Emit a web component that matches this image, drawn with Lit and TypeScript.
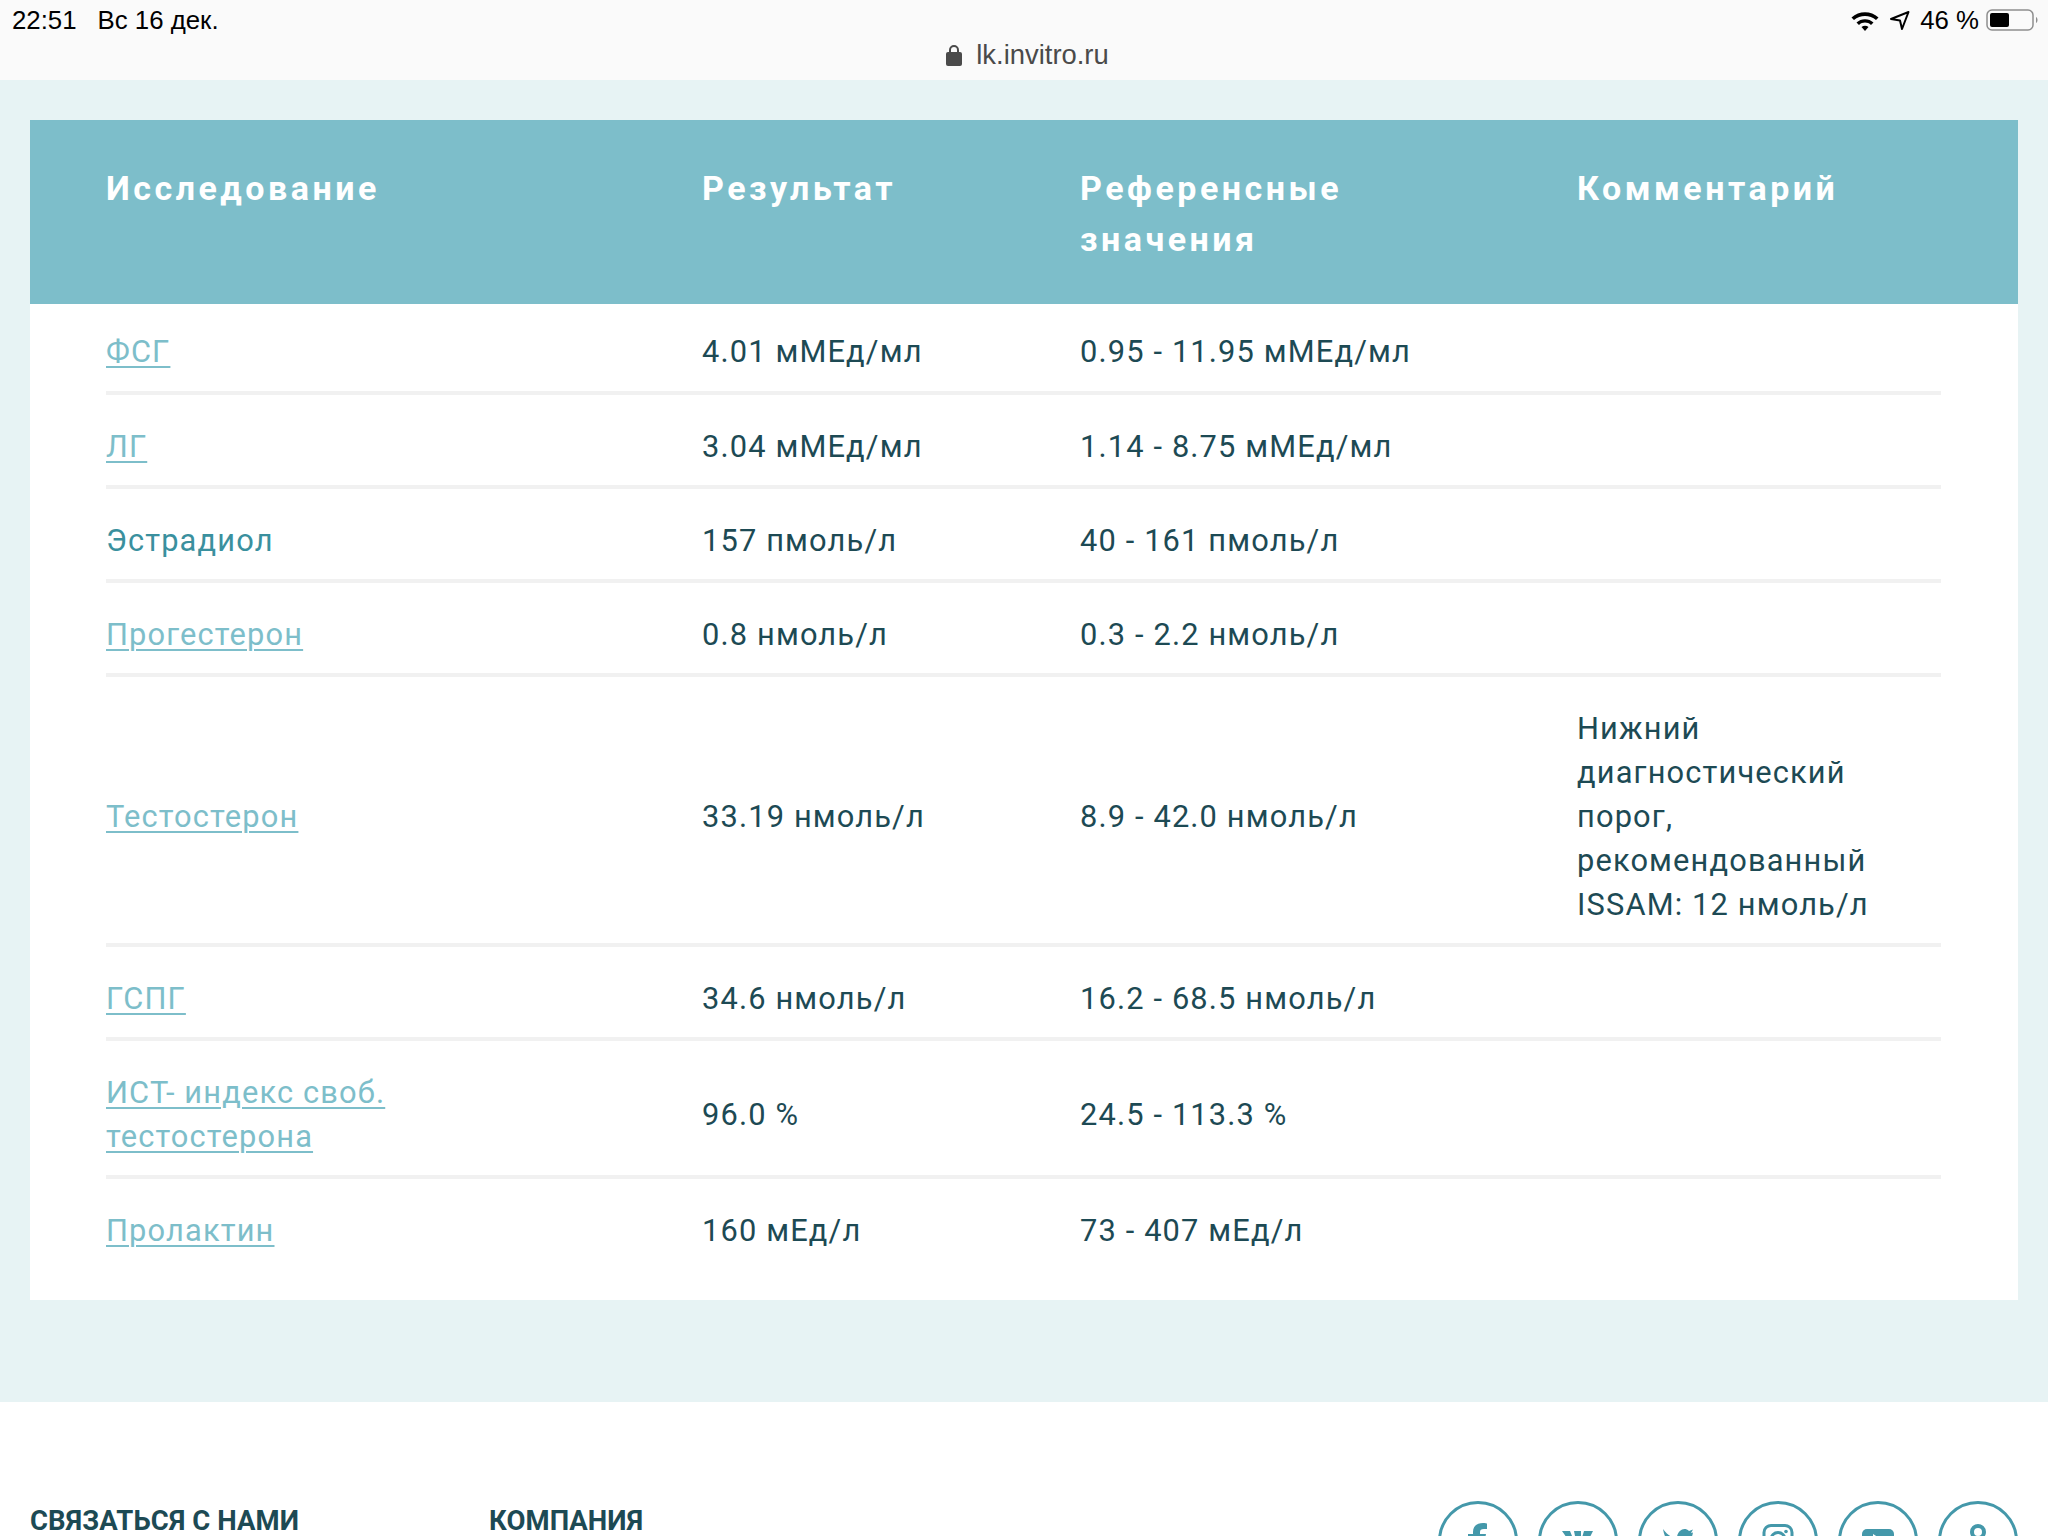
import { LitElement, html, svg, css } from "lit";
import { customElement } from "lit/decorators.js";

type Row = { name: string; link: boolean; res: string; ref: string; com?: string[]; h: number; first?: boolean };
const rows: Row[] = [
  { name: "ФСГ", link: true, res: "4.01 мМЕд/мл", ref: "0.95 - 11.95 мМЕд/мл", h: 91, first: true },
  { name: "ЛГ", link: true, res: "3.04 мМЕд/мл", ref: "1.14 - 8.75 мМЕд/мл", h: 94 },
  { name: "Эстрадиол", link: false, res: "157 пмоль/л", ref: "40 - 161 пмоль/л", h: 94 },
  { name: "Прогестерон", link: true, res: "0.8 нмоль/л", ref: "0.3 - 2.2 нмоль/л", h: 94 },
  { name: "Тестостерон", link: true, res: "33.19 нмоль/л", ref: "8.9 - 42.0 нмоль/л", com: ["Нижний", "диагностический", "порог,", "рекомендованный", "ISSAM: 12 нмоль/л"], h: 270 },
  { name: "ГСПГ", link: true, res: "34.6 нмоль/л", ref: "16.2 - 68.5 нмоль/л", h: 94 },
  { name: "ИСТ- индекс своб. тестостерона", link: true, res: "96.0 %", ref: "24.5 - 113.3 %", h: 138 },
  { name: "Пролактин", link: true, res: "160 мЕд/л", ref: "73 - 407 мЕд/л", h: 90 },
];

const icons = [
  svg`<path class="ic" d="M35 62V38H30V33H35V31C35 25 39 22 45 22C47 22 49 22.500 49 22.500V28H46C43 28 42 29 42 31V33H48L47 38H42V62Z"/>`,
  svg`<path class="ic" d="M24 30H32L36 40H31ZM36 30H43V40H38ZM46 30H55L50 40H43Z"/>`,
  svg`<path class="ic" d="M25 28C30 35 35 37 39 37C39 30 46 25 51 30L55 28.500L53 32L55 31.500C53 43 44 51 30 49C36 48 38 46 39 45C33 45 27 40 25 28Z"/>`,
  svg`<rect class="ico" x="26" y="24.500" width="28" height="28" rx="7"/><circle class="ico" cx="40" cy="38.500" r="7"/><circle class="ic" cx="48" cy="30.500" r="1.800"/>`,
  svg`<rect class="ic" x="24" y="28" width="32" height="24" rx="5"/><path d="M35 33L46 40L35 47Z" fill="#fff"/>`,
  svg`<circle class="icw" cx="40" cy="31" r="6"/><path class="icw" d="M40 37V64"/>`,
];

@customElement("app-root")
export class AppRoot extends LitElement {
  static styles = css`
    :host { display: block; height: 1536px; overflow: hidden; background: #fff; font-family: Roboto, "Noto Sans", sans-serif; }
    .status { height: 80px; background: #fafafa; color: #000; font-family: "Liberation Sans", sans-serif; }
    .top { display: flex; justify-content: space-between; align-items: center; height: 40px; padding: 0 8px 0 12px; font-size: 25.800px; }
    .left { display: flex; gap: 21px; }
    .right { display: flex; align-items: center; }
    .pct { margin-left: 9px; }
    .m1 { margin-left: 9px; }
    .m2 { margin-left: 7px; }
    .url { display: flex; justify-content: center; align-items: center; gap: 14px; font-size: 27.400px; color: #4a4a4a; height: 30px; padding-left: 7px; }
    .main { background: #e7f3f4; padding: 40px 30px 102px; height: 1322px; box-sizing: border-box; }
    .card { background: #fff; height: 1180px; }
    .grid { display: grid; grid-template-columns: 596px 378px 497px 1fr; padding: 0 77px 0 76px; }
    .head { background: #7dbeca; height: 184px; padding-top: 43px; box-sizing: border-box; color: #fff; font-weight: 700; font-size: 34px; line-height: 51px; letter-spacing: 3.500px; }
    .row { box-sizing: border-box; align-items: center; margin: 0 77px 0 76px; padding: 14px 0 0; border-bottom: 4px solid #f1f1f1; color: #1d4a54; font-size: 30.800px; line-height: 44px; letter-spacing: 1.150px; }
    .row.first { padding-top: 8px; }
    .row.last { border-bottom: 0; }
    a { color: #7dbeca; text-decoration: underline; text-underline-offset: 4px; text-decoration-thickness: 2px; }
    .plain { color: #3a909e; }
    .nm { max-width: 330px; }
    .foot { display: flex; background: #fff; height: 134px; padding: 0 30px; box-sizing: border-box; }
    .ft { font-weight: 700; color: #1d4a54; font-size: 27.500px; letter-spacing: 0.100px; line-height: 36px; margin-top: 101px; }
    .ft.a { width: 459px; }
    .soc { margin-left: auto; display: flex; gap: 20px; margin-top: 99px; }
    .c { width: 80px; height: 80px; flex: none; }
    .ring { fill: none; stroke: #4498aa; stroke-width: 3; }
    .ic { fill: #4498aa; }
    .ico { fill: none; stroke: #4498aa; stroke-width: 3; }
    .icw { fill: none; stroke: #4498aa; stroke-width: 4; }
  `;

  render() {
    return html`
      <div class="status">
        <div class="top">
          <div class="left"><span>22:51</span><span>Вс 16 дек.</span></div>
          <div class="right">
            <svg width="30" height="24" viewBox="0 0 30 24" fill="#000"><path d="M1.500 9.500C9 2.500 21 2.500 28.500 9.500L26 12C20 6.500 10 6.500 4 12Z"/><path d="M6.500 14.500C11 10 19 10 23.500 14.500L21 17C17.500 13.800 12.500 13.800 9 17Z"/><path d="M11.500 19C13.500 17.300 16.500 17.300 18.500 19L15 23Z"/></svg>
            <svg class="m1" width="22" height="22" viewBox="0 0 22 22" fill="none" stroke="#000" stroke-width="2"><path d="M2 10L19.500 3L13 20L11 11.500Z" stroke-linejoin="round"/></svg>
            <span class="pct">46 %</span>
            <svg class="m2" width="54" height="24" viewBox="0 0 54 24"><rect x="1" y="2" width="46" height="20" rx="5" fill="none" stroke="#8e8e8e" stroke-width="1.500"/><rect x="4" y="5" width="19" height="14" rx="2" fill="#000"/><path d="M50 9C52 10 52 14 50 15Z" fill="#8e8e8e"/></svg>
          </div>
        </div>
        <div class="url">
          <svg width="16" height="22" viewBox="0 0 16 22"><path d="M4 9V6a4 4 0 0 1 8 0v3" fill="none" stroke="#4a4a4a" stroke-width="2"/><rect x="0" y="8" width="16" height="14" rx="2" fill="#4a4a4a"/></svg>
          <span>lk.invitro.ru</span>
        </div>
      </div>
      <div class="main">
        <div class="card">
          <div class="grid head">
            <div>Исследование</div><div>Результат</div><div>Референсные<br />значения</div><div>Комментарий</div>
          </div>
          ${rows.map((r, i) => html`
            <div class="grid row ${r.first ? "first" : ""} ${i === rows.length - 1 ? "last" : ""}" style="height:${r.h}px">
              <div class="nm">${r.link ? html`<a href="#">${r.name}</a>` : html`<span class="plain">${r.name}</span>`}</div>
              <div>${r.res}</div><div>${r.ref}</div>
              <div>${(r.com ?? []).map((l) => html`${l}<br />`)}</div>
            </div>`)}
        </div>
      </div>
      <div class="foot">
        <div class="ft a">СВЯЗАТЬСЯ С НАМИ</div><div class="ft">КОМПАНИЯ</div>
        <div class="soc">
          ${icons.map((p) => html`<svg class="c" viewBox="0 0 80 80"><circle class="ring" cx="40" cy="40" r="38.500"/>${p}</svg>`)}
        </div>
      </div>
    `;
  }
}
